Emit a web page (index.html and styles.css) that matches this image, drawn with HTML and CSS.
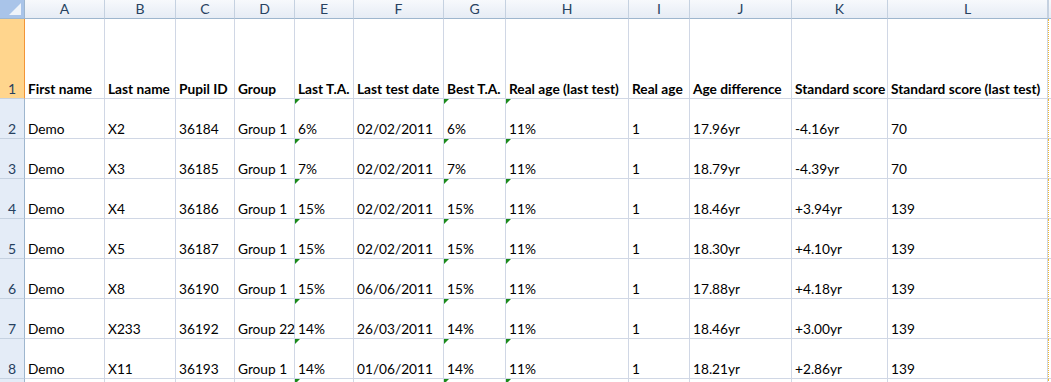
FILE: index.html
```html
<!DOCTYPE html>
<html>
<head>
<meta charset="utf-8">
<link rel="stylesheet" href="styles.css">
</head>
<body>
<div class="sheet">
  <div class="corner"><span class="tri"></span></div>
  <div class="ch">A</div><div class="ch">B</div><div class="ch">C</div><div class="ch">D</div>
  <div class="ch">E</div><div class="ch">F</div><div class="ch">G</div><div class="ch">H</div>
  <div class="ch">I</div><div class="ch">J</div><div class="ch">K</div><div class="ch">L</div>
  <div class="ch extra"></div>

  <div class="rh sel">1</div>
  <div class="c b">First name</div><div class="c b">Last name</div><div class="c b">Pupil ID</div><div class="c b">Group</div>
  <div class="c b">Last T.A.</div><div class="c b">Last test date</div><div class="c b">Best T.A.</div><div class="c b">Real age (last test)</div>
  <div class="c b">Real age</div><div class="c b">Age difference</div><div class="c b">Standard score</div><div class="c b">Standard score (last test)</div>
  <div class="c extra"></div>

  <div class="rh">2</div>
  <div class="c">Demo</div><div class="c">X2</div><div class="c">36184</div><div class="c">Group 1</div>
  <div class="c w">6%</div><div class="c">02/02/2011</div><div class="c w">6%</div><div class="c w">11%</div>
  <div class="c">1</div><div class="c">17.96yr</div><div class="c">-4.16yr</div><div class="c">70</div>
  <div class="c extra"></div>

  <div class="rh">3</div>
  <div class="c">Demo</div><div class="c">X3</div><div class="c">36185</div><div class="c">Group 1</div>
  <div class="c w">7%</div><div class="c">02/02/2011</div><div class="c w">7%</div><div class="c w">11%</div>
  <div class="c">1</div><div class="c">18.79yr</div><div class="c">-4.39yr</div><div class="c">70</div>
  <div class="c extra"></div>

  <div class="rh">4</div>
  <div class="c">Demo</div><div class="c">X4</div><div class="c">36186</div><div class="c">Group 1</div>
  <div class="c w">15%</div><div class="c">02/02/2011</div><div class="c w">15%</div><div class="c w">11%</div>
  <div class="c">1</div><div class="c">18.46yr</div><div class="c">+3.94yr</div><div class="c">139</div>
  <div class="c extra"></div>

  <div class="rh">5</div>
  <div class="c">Demo</div><div class="c">X5</div><div class="c">36187</div><div class="c">Group 1</div>
  <div class="c w">15%</div><div class="c">02/02/2011</div><div class="c w">15%</div><div class="c w">11%</div>
  <div class="c">1</div><div class="c">18.30yr</div><div class="c">+4.10yr</div><div class="c">139</div>
  <div class="c extra"></div>

  <div class="rh">6</div>
  <div class="c">Demo</div><div class="c">X8</div><div class="c">36190</div><div class="c">Group 1</div>
  <div class="c w">15%</div><div class="c">06/06/2011</div><div class="c w">15%</div><div class="c w">11%</div>
  <div class="c">1</div><div class="c">17.88yr</div><div class="c">+4.18yr</div><div class="c">139</div>
  <div class="c extra"></div>

  <div class="rh">7</div>
  <div class="c">Demo</div><div class="c">X233</div><div class="c">36192</div><div class="c">Group 22</div>
  <div class="c w">14%</div><div class="c">26/03/2011</div><div class="c w">14%</div><div class="c w">11%</div>
  <div class="c">1</div><div class="c">18.46yr</div><div class="c">+3.00yr</div><div class="c">139</div>
  <div class="c extra"></div>

  <div class="rh">8</div>
  <div class="c">Demo</div><div class="c">X11</div><div class="c">36193</div><div class="c">Group 1</div>
  <div class="c w">14%</div><div class="c">01/06/2011</div><div class="c w">14%</div><div class="c w">11%</div>
  <div class="c">1</div><div class="c">18.21yr</div><div class="c">+2.86yr</div><div class="c">139</div>
  <div class="c extra"></div>

  <div class="rh"></div>
  <div class="c"></div><div class="c"></div><div class="c"></div><div class="c"></div>
  <div class="c w"></div><div class="c"></div><div class="c w"></div><div class="c w"></div>
  <div class="c"></div><div class="c"></div><div class="c"></div><div class="c"></div>
  <div class="c extra"></div>
</div>
</body>
</html>
```
FILE: styles.css
```css
html, body {
  margin: 0;
  padding: 0;
  background: #ffffff;
  overflow: hidden;
}
.sheet {
  display: grid;
  grid-template-columns: 25px 80px 71px 59px 60px 59px 90px 62px 123px 61px 102px 96px 160px 20px;
  grid-template-rows: 19px 80px repeat(8, 40px);
  font-family: Lato, "Open Sans", sans-serif;
  font-size: 13.7px;
  line-height: 16px;
  color: #000000;
  width: 1068px;
  height: 382px;
  overflow: hidden;
}
.corner {
  position: relative;
  background: #a9c4e9;
  border-right: 1px solid #9eb6ce;
  border-bottom: 1px solid #9eb6ce;
  box-sizing: border-box;
}
.corner .tri {
  position: absolute;
  right: 3px;
  bottom: 3px;
  width: 0;
  height: 0;
  border-left: 12px solid transparent;
  border-bottom: 12px solid #eef3fa;
}
.ch {
  box-sizing: border-box;
  background: linear-gradient(#f7f9fc, #e6ecf5);
  border-right: 1px solid #c5d1e0;
  border-bottom: 1px solid #9eb6ce;
  color: #27415f;
  font-size: 14px;
  text-align: center;
  line-height: 18px;
}
.ch.extra {
  border-right: none;
  border-left: 1px solid #c5d1e0;
}
.rh {
  box-sizing: border-box;
  background: #e4ecf7;
  border-right: 1px solid #9eb6ce;
  border-bottom: 1px solid #c5d1e0;
  color: #27415f;
  font-size: 14px;
  display: flex;
  align-items: flex-end;
  justify-content: center;
  padding-bottom: 1px;
}
.rh.sel {
  background: #ffd58d;
  border-right: 1px solid #f29436;
}
.c {
  position: relative;
  box-sizing: border-box;
  border-right: 1px solid #d0d7e5;
  border-bottom: 1px solid #d0d7e5;
  display: flex;
  align-items: flex-end;
  padding: 0 0 1px 3px;
  white-space: nowrap;
  overflow: visible;
}
.c.b {
  font-weight: bold;
}
.c.w::before {
  content: "";
  position: absolute;
  left: 0;
  top: 0;
  width: 0;
  height: 0;
  border-top: 5px solid #1a8a1a;
  border-right: 5px solid transparent;
}
.c.extra {
  border-right: none;
  border-left: 1px dotted #f0b830;
}
```
